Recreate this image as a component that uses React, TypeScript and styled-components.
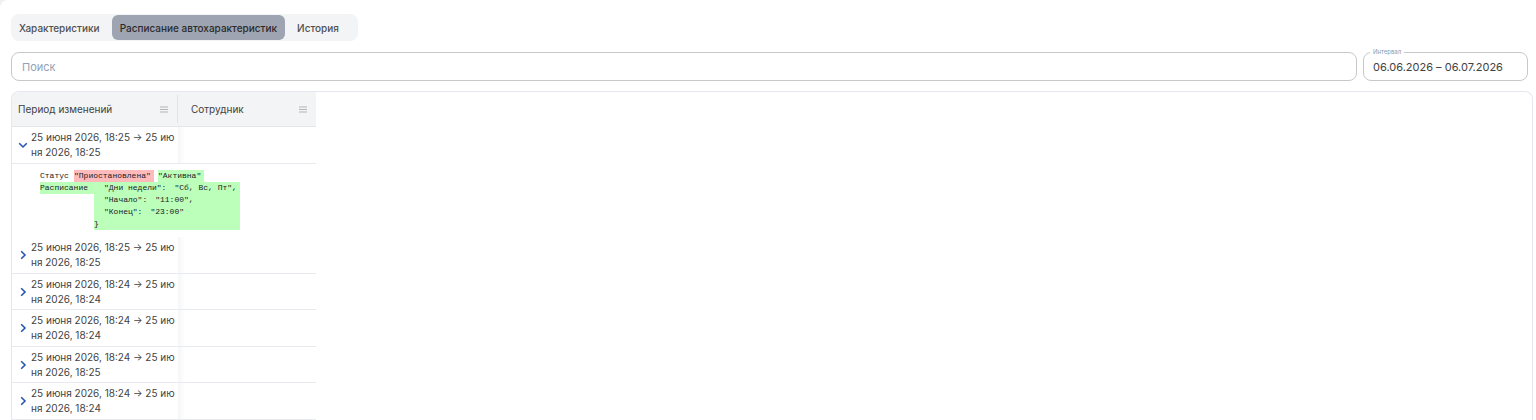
import React, { useState } from "react";
import styled, { createGlobalStyle } from "styled-components";

const GlobalStyle = createGlobalStyle`
  *, *::before, *::after { box-sizing: border-box; }
  body {
    margin: 0;
    background: #eef0f3;
    color: #424242;
    font-family: Inter, "Liberation Sans", sans-serif;
    font-size: 10px;
  }
  button, input { font: inherit; color: inherit; }
`;

const Page = styled.main`
  min-height: 100vh;
  padding: 14px 3px 0 11px;
  background: #fff;
  border-top-left-radius: 8px;
`;

const Tabs = styled.div`
  display: inline-flex;
  gap: 4px;
  vertical-align: top;
  padding: 1px 11px 1px 0;
  border-radius: 8px;
  background: #f3f4f6;
`;

const Tab = styled.button<{ $active: boolean }>`
  height: 25px;
  padding: 0 8px;
  border: 0;
  border-radius: 6px;
  background: ${(p) => (p.$active ? "#9ea4b2" : "transparent")};
  color: ${(p) => (p.$active ? "#2b2b2b" : "#505050")};
  font-weight: 500;
  white-space: nowrap;
  cursor: pointer;
`;

const Filters = styled.div`
  display: flex;
  gap: 6px;
  margin: 11px 5px 10px 0;
`;

const SearchInput = styled.input`
  flex: 1;
  width: 100%;
  min-width: 0;
  height: 29px;
  padding: 0 10px;
  border: 1px solid #c6c9cc;
  border-radius: 8px;
  background: #fff;
  font-size: 11px;
  outline: 0;
  &::placeholder { color: #93a1b4; opacity: 1; }
`;

const IntervalField = styled.label`
  position: relative;
  flex: 0 0 165px;
  display: flex;
`;

const IntervalLabel = styled.span`
  position: absolute;
  top: -4px;
  left: 7px;
  padding: 0 3px;
  background: #fff;
  color: #8b9bad;
  font-size: 6px;
  line-height: 7px;
`;

const IntervalInput = styled(SearchInput)`
  padding: 0 9px;
`;

const TableFrame = styled.section`
  overflow: hidden;
  border: 1px solid #e6e8ef;
  border-bottom: 0;
  border-radius: 8px 8px 0 0;
`;

const HistoryTable = styled.table`
  width: 304px;
  table-layout: fixed;
  border-collapse: separate;
  border-spacing: 0;
`;

const HeadCell = styled.th`
  height: 35px;
  padding: 0;
  border-bottom: 1px solid #e4e7ea;
  background: #f3f4f6;
  font-weight: 400;
  text-align: left;
  &:first-child { width: 166px; }
`;

const HeadContent = styled.div<{ $divided?: boolean }>`
  display: flex;
  align-items: center;
  justify-content: space-between;
  height: 28px;
  padding: 0 9px 0 ${(p) => (p.$divided ? 6 : 13)}px;
  border-right: ${(p) => (p.$divided ? "1px solid #e1e4ea" : "0")};
`;

const MenuButton = styled.button`
  display: flex;
  padding: 0;
  border: 0;
  background: none;
  color: #b4b4b4;
  cursor: pointer;
`;

const Row = styled.tr`
  height: 37px;
  &:nth-child(even) { height: 36px; }
`;

const Cell = styled.td`
  padding: 0;
  border-bottom: 1px solid #e8eaf0;
`;

const EmptyCell = styled(Cell)`
  background: linear-gradient(to right, #f5f6f7, #fff 7px);
`;

const Period = styled.div`
  display: flex;
  align-items: center;
  padding-left: 6px;
`;

const ExpandButton = styled.button`
  display: flex;
  flex: none;
  width: 13px;
  padding: 0;
  border: 0;
  background: none;
  color: #2457b3;
  cursor: pointer;
`;

const PeriodText = styled.span`
  width: 146px;
  line-height: 15px;
  word-break: break-all;
`;

const DetailCell = styled.td`
  padding: 6px 0 7px 28px;
`;

const Change = styled.div`
  display: flex;
  align-items: flex-start;
  color: #222;
  font-family: "Liberation Mono", monospace;
  font-size: 8px;
  line-height: 12px;
  white-space: pre;
`;

const ChangeName = styled.span<{ $added?: boolean }>`
  width: ${(p) => (p.$added ? 54 : 34)}px;
  background: ${(p) => (p.$added ? "#bbffbb" : "none")};
`;

const Removed = styled.del`
  width: 80px;
  margin-right: 4px;
  background: #ffbbbb;
  text-decoration: none;
`;

const Added = styled.ins`
  width: 46px;
  background: #bbffbb;
  text-decoration: none;
`;

const AddedBlock = styled.ins`
  width: 146px;
  background: #bbffbb;
  text-decoration: none;
`;

const Property = styled.div`
  display: flex;
  gap: 8px;
  padding-left: 10px;
`;

const MenuIcon = () => (
  <svg width="8" height="7" viewBox="0 0 8 7" aria-hidden="true">
    <path d="M0 1h8M0 3.5h8M0 6h8" stroke="currentColor" strokeWidth="1" />
  </svg>
);

const Chevron = ({ open }: { open: boolean }) => (
  <svg width="10" height="10" viewBox="0 0 10 10" fill="none" aria-hidden="true">
    <path
      d={open ? "M1.2 3.3 5 7l3.8-3.7" : "M3.2 1.2 7 5 3.2 8.8"}
      stroke="currentColor"
      strokeWidth="1.6"
    />
  </svg>
);

const tabs = ["Характеристики", "Расписание автохарактеристик", "История"];

const periods = [
  "25 июня 2026, 18:25 → 25 июня 2026, 18:25",
  "25 июня 2026, 18:25 → 25 июня 2026, 18:25",
  "25 июня 2026, 18:24 → 25 июня 2026, 18:24",
  "25 июня 2026, 18:24 → 25 июня 2026, 18:24",
  "25 июня 2026, 18:24 → 25 июня 2026, 18:25",
  "25 июня 2026, 18:24 → 25 июня 2026, 18:24",
];

const schedule = [
  ['"Дни недели":', '"Сб, Вс, Пт",'],
  ['"Начало":', '"11:00",'],
  ['"Конец":', '"23:00"'],
];

const Details = () => (
  <tr>
    <DetailCell colSpan={2}>
      <Change>
        <ChangeName>Статус</ChangeName>
        <Removed>"Приостановлена"</Removed>
        <Added>"Активна"</Added>
      </Change>
      <Change>
        <ChangeName $added>Расписание</ChangeName>
        <AddedBlock>
          {schedule.map(([name, value]) => (
            <Property key={name}>
              <span>{name}</span>
              <span>{value}</span>
            </Property>
          ))}
          {"}"}
        </AddedBlock>
      </Change>
    </DetailCell>
  </tr>
);

export default function App() {
  const [tab, setTab] = useState(1);
  const [expanded, setExpanded] = useState<number | null>(0);

  return (
    <Page>
      <GlobalStyle />
      <Tabs role="tablist">
        {tabs.map((name, i) => (
          <Tab
            key={name}
            role="tab"
            aria-selected={tab === i}
            $active={tab === i}
            onClick={() => setTab(i)}
          >
            {name}
          </Tab>
        ))}
      </Tabs>
      <Filters>
        <SearchInput type="search" placeholder="Поиск" aria-label="Поиск" />
        <IntervalField>
          <IntervalInput type="text" defaultValue="06.06.2026 – 06.07.2026" />
          <IntervalLabel>Интервал</IntervalLabel>
        </IntervalField>
      </Filters>
      <TableFrame>
        <HistoryTable>
          <thead>
            <tr>
              <HeadCell scope="col">
                <HeadContent $divided>
                  Период изменений
                  <MenuButton aria-label="Меню столбца «Период изменений»"><MenuIcon /></MenuButton>
                </HeadContent>
              </HeadCell>
              <HeadCell scope="col">
                <HeadContent>
                  Сотрудник
                  <MenuButton aria-label="Меню столбца «Сотрудник»"><MenuIcon /></MenuButton>
                </HeadContent>
              </HeadCell>
            </tr>
          </thead>
          <tbody>
            {periods.map((period, i) => (
              <React.Fragment key={i}>
                <Row>
                  <Cell>
                    <Period>
                      <ExpandButton
                        aria-label="Показать изменения"
                        aria-expanded={expanded === i}
                        onClick={() => setExpanded(expanded === i ? null : i)}
                      >
                        <Chevron open={expanded === i} />
                      </ExpandButton>
                      <PeriodText>{period}</PeriodText>
                    </Period>
                  </Cell>
                  <EmptyCell />
                </Row>
                {expanded === i && <Details />}
              </React.Fragment>
            ))}
          </tbody>
        </HistoryTable>
      </TableFrame>
    </Page>
  );
}
